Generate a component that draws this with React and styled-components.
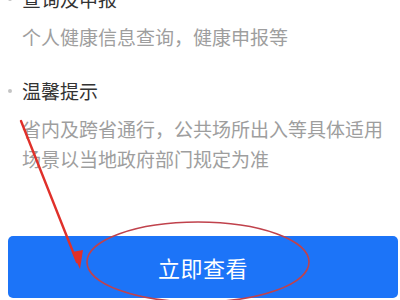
import React from "react";
import styled, { createGlobalStyle } from "styled-components";

const GlobalStyle = createGlobalStyle`
  html, body {
    margin: 0;
    padding: 0;
    background: #ffffff;
    overflow: hidden;
  }
  body {
    font-family: "Noto Sans CJK SC", "Noto Sans", sans-serif;
  }
`;

const Page = styled.div`
  position: relative;
  width: 400px;
  height: 300px;
  overflow: hidden;
  background: #fff;
`;

const Content = styled.div`
  display: flex;
  flex-direction: column;
  margin-top: -16px;
  padding: 0 2px 0 8px;
`;

const Section = styled.div`
  display: flex;
  flex-direction: column;
  margin-bottom: ${(p) => p.$gap || 0}px;
`;

const TitleRow = styled.div`
  display: flex;
  align-items: center;
  height: 30px;
`;

const Dot = styled.span`
  width: 4px;
  height: 4px;
  border-radius: 50%;
  background: #c4c4c4;
  margin: 0 10px 0 0;
`;

const Title = styled.span`
  font-size: 19px;
  line-height: 30px;
  color: #333333;
`;

const Desc = styled.div`
  margin-top: 8px;
  padding-left: 14px;
  font-size: 19px;
  line-height: 30px;
  color: #9e9e9e;
`;

const Button = styled.button`
  display: flex;
  align-items: center;
  justify-content: center;
  width: 390px;
  height: 62px;
  margin: 0;
  border: none;
  border-radius: 5px;
  background: #1c74f8;
  color: #ffffff;
  font-family: "Noto Sans CJK SC", "Noto Sans", sans-serif;
  font-size: 22px;
  letter-spacing: 0.5px;
  padding: 0;
`;

const Markup = styled.svg`
  position: absolute;
  left: 0;
  top: 0;
  pointer-events: none;
`;

const items = [
  { title: "查询及申报", desc: "个人健康信息查询，健康申报等", gap: 24 },
  {
    title: "温馨提示",
    desc: "省内及跨省通行，公共场所出入等具体适用场景以当地政府部门规定为准",
    gap: 62,
  },
];

export default function App() {
  return (
    <Page>
      <GlobalStyle />
      <Content>
        {items.map((it) => (
          <Section key={it.title} $gap={it.gap}>
            <TitleRow>
              <Dot />
              <Title>{it.title}</Title>
            </TitleRow>
            <Desc>{it.desc}</Desc>
          </Section>
        ))}
        <Button>立即查看</Button>
      </Content>
      <Markup width="400" height="300" viewBox="0 0 400 300">
        <ellipse
          cx="198"
          cy="262"
          rx="111"
          ry="40"
          fill="none"
          stroke="#c0424c"
          strokeWidth="1.6"
        />
        <line
          x1="21"
          y1="121"
          x2="77"
          y2="262"
          stroke="#e0302a"
          strokeWidth="2.4"
          strokeLinecap="round"
        />
        <path d="M72 252 L80 269 L83 250 Z" fill="#e0302a" />
      </Markup>
    </Page>
  );
}
